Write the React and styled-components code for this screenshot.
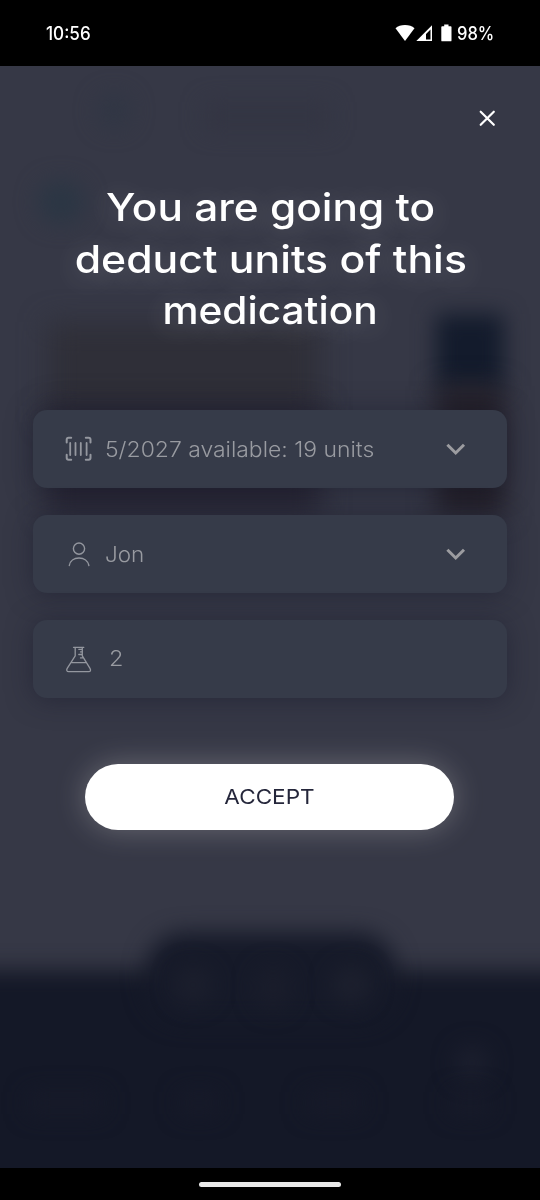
import React, { useState } from 'react';
import styled, { createGlobalStyle } from 'styled-components';

const GlobalStyle = createGlobalStyle`
  * { box-sizing: border-box; }
  body { margin: 0; background: #000; }
`

const Phone = styled.div`
  width: 540px;
  height: 1200px;
  display: flex;
  flex-direction: column;
  background: #000;
  color: #fff;
  font-family: Inter, "Liberation Sans", sans-serif;
  overflow: hidden;
`

const StatusBar = styled.header`
  height: 66px;
  flex: none;
  display: flex;
  align-items: center;
  justify-content: space-between;
  padding: 0 47px 0 46px;
  font-size: 18px;
  font-weight: 500;
`

const StatusIcons = styled.div`
  display: flex;
  align-items: center;
  gap: 1px;
`

const Percent = styled.span`
  width: 36px;
  margin-left: 4px;
`

const Screen = styled.main`
  position: relative;
  height: 1102px;
  flex: none;
  background: #363846;
  overflow: hidden;
`

/* the page that stays out of focus behind the dialog */
const Backdrop = styled.div`
  position: absolute;
  inset: 0;
  overflow: hidden;
`

const Blur = styled.div`
  position: absolute;
  left: ${p => p.$x}px;
  top: ${p => p.$y}px;
  width: ${p => p.$w}px;
  height: ${p => p.$h}px;
  border-radius: ${p => p.$r || 0}px;
  background: ${p => p.$bg};
  filter: blur(${p => p.$blur || 11}px);
`

const Dialog = styled.div`
  position: relative;
  height: 100%;
  display: flex;
  flex-direction: column;
  align-items: center;
  padding: 41px 33px 0;
`

const CloseButton = styled.button`
  align-self: flex-end;
  width: 22px;
  height: 22px;
  margin-right: 9px;
  padding: 0;
  border: 0;
  background: none;
  color: #fff;
  cursor: pointer;
  svg { display: block; }
`

const Title = styled.h1`
  margin: 53px 0 0 1px;
  display: flex;
  flex-direction: column;
  align-items: center;
  font-size: 38.5px;
  font-weight: 500;
  line-height: 51.5px;
  white-space: nowrap;
  text-shadow: 0 4px 26px rgba(255, 255, 255, 0.24);
`

const Stretch = styled.span`
  display: block;
  transform: scaleX(${p => p.$by || 1});
  transform-origin: ${p => p.$from || 'center'};
`

const Fields = styled.div`
  width: 100%;
  margin-top: 73px;
  display: flex;
  flex-direction: column;
  gap: 27px;
`

const Field = styled.div`
  height: 78px;
  display: flex;
  align-items: center;
  padding: 0 41px 0 32px;
  border-radius: 14px;
  background: #363b49;
  box-shadow: 0 2px 26px rgba(24, 26, 44, 0.5);
  color: #999ba1;
  font-size: 21px;
  font-weight: 300;
  white-space: nowrap;
`

const FieldIcon = styled.span`
  width: 28px;
  height: 28px;
  margin-right: ${p => p.$gap || 12}px;
  flex: none;
  svg { display: block; }
`

const Value = styled.span`
  flex: 1;
  padding-top: ${p => (p.$select ? 1 : 0)}px;
`

const AcceptButton = styled.button`
  width: 369px;
  height: 66px;
  margin: 66px 0 0 -1px;
  border: 0;
  border-radius: 33px;
  background: #fff;
  color: #24263a;
  font-family: inherit;
  font-size: 20.5px;
  font-weight: 400;
  box-shadow: 0 0 30px rgba(255, 250, 245, 0.26);
  cursor: pointer;
`

const GestureBar = styled.footer`
  height: 32px;
  flex: none;
  display: flex;
  justify-content: center;
  padding-top: 14px;
  &::after {
    content: '';
    width: 142px;
    height: 5px;
    border-radius: 3px;
    background: #e9e9e9;
  }
`

const WifiIcon = () => (
  <svg width="20" height="18" viewBox="0 0 20 18">
    <path d="M0.5 4.2C3 2 6 0.9 10 0.9S17 2 19.5 4.2L10 17Z" fill="#fff" />
  </svg>
)

const SignalIcon = () => (
  <svg width="17" height="18" viewBox="0 0 17 18">
    <path fillRule="evenodd" d="M0.3 17L16 1.3V17ZM10 15.6H14.5V5.4L10 9.9Z" fill="#fff" />
  </svg>
)

const BatterySvg = styled.svg`
  margin-left: 7px;
`

const BatteryIcon = () => (
  <BatterySvg width="11" height="18" viewBox="0 0 11 18">
    <path d="M3.2 0.5H7.5V2.2H9.6Q10.5 2.2 10.5 3.1V16.4Q10.5 17.3 9.6 17.3H1.2Q.3 17.3 .3 16.4V3.1Q.3 2.2 1.2 2.2H3.2Z" fill="#fff" />
  </BatterySvg>
)

const BarcodeIcon = () => (
  <svg width="28" height="28" viewBox="0 0 28 28" fill="none" stroke="#94979f" strokeLinecap="round">
    <path strokeWidth="2" d="M1.7 7.5V4.6Q1.7 2.7 3.6 2.7H6.2M20.8 2.7H23.6Q25.5 2.7 25.5 4.6V7.5M25.5 19.7V22.8Q25.5 24.7 23.6 24.7H20.8M6.2 24.7H3.6Q1.7 24.7 1.7 22.8V19.7" />
    <path strokeWidth="1.8" d="M5.2 8V20M10.5 8V20M15.8 8V20M21.6 8V20" />
  </svg>
)

const PersonIcon = () => (
  <svg width="28" height="28" viewBox="0 0 28 28" fill="none" stroke="#94979f" strokeWidth="1.4" strokeLinecap="round">
    <circle cx="14" cy="8.6" r="5.6" />
    <path d="M4.3 25.5C5 20.8 9 18 14 18S23 20.8 23.9 25.5" />
  </svg>
)

const FlaskIcon = () => (
  <svg width="28" height="28" viewBox="0 0 28 28" fill="none" stroke="#94979f" strokeWidth="1.3" strokeLinecap="round" strokeLinejoin="round">
    <path d="M8.5 2.3H18.8M10.2 2.3V10.8L2.2 23.4C1.2 25.3 1.8 26.7 3.8 26.7H23.6C25.6 26.7 26 25.3 25 23.4L17.3 10.8V2.3M7 17.7H21.2M13.8 4.3H17M13.8 9.5H17M15.5 6.9H17M15.5 12.9H18.4" />
  </svg>
)

const Chevron = () => (
  <svg width="20" height="14" viewBox="0 0 20 14" fill="none" stroke="#9c9ca0" strokeWidth="3">
    <path d="M1.4 2.7L9.7 11L18 2.7" />
  </svg>
)

const TITLE = [
  { text: 'You are going to', by: 1.1 },
  { text: 'deduct units of this', by: 1.109 },
  { text: 'medication', by: 1.055 },
]

const FIELDS = [
  { id: 'batch', icon: <BarcodeIcon />, text: '5/2027 available: 19 units', by: 1.092, select: true },
  { id: 'patient', icon: <PersonIcon />, text: 'Jon', by: 1.07, select: true },
  { id: 'units', icon: <FlaskIcon />, text: '2', by: 1.12, gap: 16 },
]

const BLURS = [
  { $x: 97, $y: 28, $w: 34, $h: 34, $bg: '#303644', $r: 17 },
  { $x: 205, $y: 36, $w: 125, $h: 28, $bg: '#333543' },
  { $x: 38, $y: 115, $w: 46, $h: 42, $bg: '#2b3644', $r: 20 },
  { $x: 48, $y: 256, $w: 272, $h: 100, $bg: '#2f2f38', $blur: 14 },
  { $x: 48, $y: 340, $w: 272, $h: 108, $bg: '#272533', $blur: 14 },
  { $x: 436, $y: 248, $w: 68, $h: 76, $bg: '#131b2c' },
  { $x: 436, $y: 320, $w: 68, $h: 130, $bg: '#231f28', $blur: 13 },
  // bottom navigation
  { $x: -40, $y: 904, $w: 620, $h: 260, $bg: '#141827' },
  { $x: 146, $y: 866, $w: 250, $h: 90, $bg: '#161a29', $r: 38 },
  { $x: 174, $y: 900, $w: 38, $h: 38, $bg: '#1c1f2d', $r: 19 },
  { $x: 256, $y: 900, $w: 34, $h: 44, $bg: '#1a1d2b', $r: 17 },
  { $x: 332, $y: 900, $w: 38, $h: 38, $bg: '#1d202e', $r: 19 },
  { $x: 455, $y: 980, $w: 34, $h: 34, $bg: '#1c1f2e', $r: 17 },
  { $x: 28, $y: 1026, $w: 76, $h: 22, $bg: '#171a29' },
  { $x: 180, $y: 1026, $w: 38, $h: 22, $bg: '#171a29' },
  { $x: 306, $y: 1026, $w: 56, $h: 22, $bg: '#171a29' },
  { $x: 450, $y: 1026, $w: 40, $h: 22, $bg: '#171a29' },
]

export default function App() {
  const [open, setOpen] = useState(true);

  return (
    <>
      <GlobalStyle />
      <Phone>
        <StatusBar>
          <Stretch $by={0.95} $from="left">10:56</Stretch>
          <StatusIcons>
            <WifiIcon />
            <SignalIcon />
            <BatteryIcon />
            <Percent><Stretch $by={0.92} $from="left">98%</Stretch></Percent>
          </StatusIcons>
        </StatusBar>
        <Screen>
          <Backdrop>
            {BLURS.map((b, index) => <Blur key={index} {...b} />)}
          </Backdrop>
          {open && (
            <Dialog>
              <CloseButton aria-label="Close" onClick={() => setOpen(false)}>
                <svg width="22" height="22" viewBox="0 0 22 22" stroke="#fff" strokeWidth="2.2" strokeLinecap="round">
                  <path d="M4.7 4.7L17.8 17.8M17.8 4.7L4.7 17.8" />
                </svg>
              </CloseButton>
              <Title>
                {TITLE.map(line => <Stretch key={line.text} $by={line.by}>{line.text}</Stretch>)}
              </Title>
              <Fields>
                {FIELDS.map(field => (
                  <Field key={field.id}>
                    <FieldIcon $gap={field.gap}>{field.icon}</FieldIcon>
                    <Value $select={field.select}>
                      <Stretch $by={field.by} $from="left">{field.text}</Stretch>
                    </Value>
                    {field.select && <Chevron />}
                  </Field>
                ))}
              </Fields>
              <AcceptButton><Stretch $by={1.1}>ACCEPT</Stretch></AcceptButton>
            </Dialog>
          )}
        </Screen>
        <GestureBar />
      </Phone>
    </>
  )
}
